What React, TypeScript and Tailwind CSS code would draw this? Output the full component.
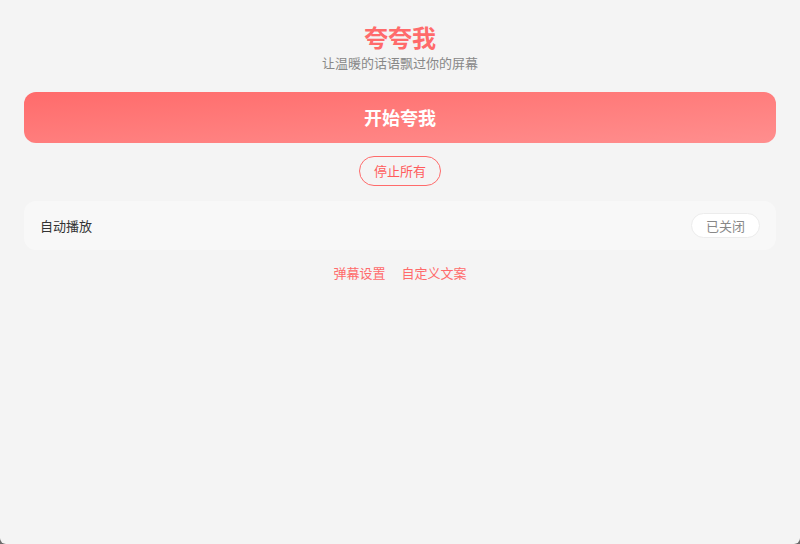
const App = () => (
  <div className="w-[800px] h-[544px] bg-[#6b6b6b]">
    <div
      className="w-full h-full bg-[#f4f4f4] rounded-b-[6px] px-6 pt-[20px] flex flex-col items-center"
      style={{ fontFamily: '"Noto Sans CJK SC", "Noto Sans", sans-serif' }}
    >
      <h1 className="text-[24px] leading-[33px] font-bold text-[#ff6b6b]">夸夸我</h1>
      <p className="text-[13px] leading-[20px] text-[#888]">让温暖的话语飘过你的屏幕</p>

      <button className="mt-[19px] w-full h-[51px] rounded-[12px] bg-gradient-to-br from-[#ff6b6b] to-[#ff8e8e] text-white text-[18px] font-bold">
        开始夸我
      </button>

      <button className="mt-[13px] h-[30px] px-[14px] rounded-full border border-[#ff6b6b] text-[13px] text-[#ff5c5c] bg-transparent">
        停止所有
      </button>

      <div className="mt-[15px] w-full h-[49px] rounded-[12px] bg-[#f8f8f8] flex items-center justify-between px-4">
        <span className="text-[13px] text-[#333]">自动播放</span>
        <span className="h-[25px] px-[14px] rounded-full bg-white border border-[#ececec] text-[13px] text-[#888] flex items-center">
          已关闭
        </span>
      </div>

      <div className="mt-[13px] flex gap-4 text-[13px] leading-[20px] text-[#ff6b6b]">
        <span>弹幕设置</span>
        <span>自定义文案</span>
      </div>
    </div>
  </div>
);

export default App;
